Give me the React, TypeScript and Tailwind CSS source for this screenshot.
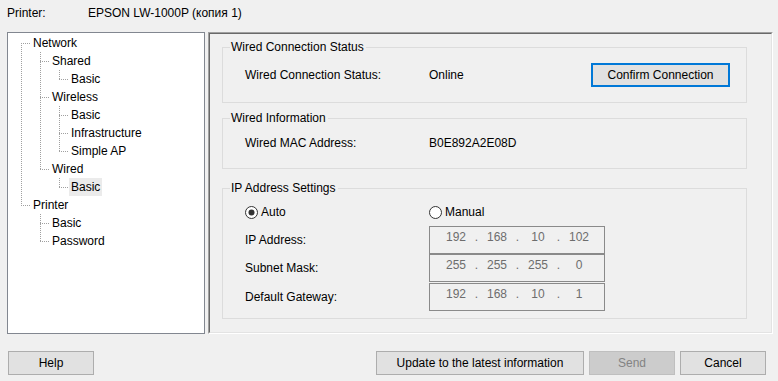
import React from "react";

type TreeItem = { label: string; level: number; selected?: boolean };

const tree: TreeItem[] = [
  { label: "Network", level: 0 },
  { label: "Shared", level: 1 },
  { label: "Basic", level: 2 },
  { label: "Wireless", level: 1 },
  { label: "Basic", level: 2 },
  { label: "Infrastructure", level: 2 },
  { label: "Simple AP", level: 2 },
  { label: "Wired", level: 1 },
  { label: "Basic", level: 2, selected: true },
  { label: "Printer", level: 0 },
  { label: "Basic", level: 1 },
  { label: "Password", level: 1 },
];

const padFor = ["pl-[25px]", "pl-[44px]", "pl-[63px]"];

function TreeLines() {
  const v = (x: number, y1: number, y2: number) => (
    <line key={`v${x}-${y1}`} x1={x + 0.5} y1={y1} x2={x + 0.5} y2={y2 + 1} />
  );
  const h = (x: number, y: number) => (
    <line key={`h${x}-${y}`} x1={x} y1={y + 0.5} x2={x + 10} y2={y + 0.5} />
  );
  return (
    <svg
      className="absolute left-0 top-0 pointer-events-none"
      width="196"
      height="300"
      stroke="#a0a0a0"
      strokeWidth="1"
      strokeDasharray="1 1"
      shapeRendering="crispEdges"
    >
      {v(13, 10, 172)}
      {h(13, 10)}
      {h(13, 172)}
      {v(32, 19, 136)}
      {h(32, 28)}
      {h(32, 64)}
      {h(32, 136)}
      {v(51, 37, 46)}
      {h(51, 46)}
      {v(51, 73, 118)}
      {h(51, 82)}
      {h(51, 100)}
      {h(51, 118)}
      {v(51, 145, 154)}
      {h(51, 154)}
      {v(32, 181, 208)}
      {h(32, 190)}
      {h(32, 208)}
    </svg>
  );
}

function Group({
  title,
  bodyClass,
  children,
}: {
  title: string;
  bodyClass: string;
  children: React.ReactNode;
}) {
  return (
    <div className="flex flex-col w-[525px]">
      <div className="flex h-[14px] items-center">
        <div className="w-[8px] h-[7px] self-end border-l border-t border-[#dcdcdc]" />
        <span className="pl-[1px] pr-[2px] whitespace-nowrap">{title}</span>
        <div className="flex-1 h-[7px] self-end border-t border-r border-[#dcdcdc]" />
      </div>
      <div className={`border-l border-r border-b border-[#dcdcdc] ${bodyClass}`}>{children}</div>
    </div>
  );
}

function Radio({ checked, label }: { checked: boolean; label: string }) {
  return (
    <div className="flex items-center gap-[3px]">
      <svg width="13" height="13" viewBox="0 0 13 13">
        <circle cx="6.5" cy="6.5" r="6" fill="#ffffff" stroke="#333333" strokeWidth="1" />
        {checked && <circle cx="6.5" cy="6.5" r="3" fill="#333333" />}
      </svg>
      <span>{label}</span>
    </div>
  );
}

function IpBox({ parts }: { parts: string[] }) {
  return (
    <div className="w-[176px] h-[28px] border border-[#8a8a8a] flex items-start pt-[3px] pl-[11px] text-[#6d6d6d]">
      <span className="w-[30px] text-center">{parts[0]}</span>
      <span className="w-[11px] text-center">.</span>
      <span className="w-[30px] text-center">{parts[1]}</span>
      <span className="w-[11px] text-center">.</span>
      <span className="w-[30px] text-center">{parts[2]}</span>
      <span className="w-[11px] text-center">.</span>
      <span className="w-[30px] text-center">{parts[3]}</span>
    </div>
  );
}

function IpRow({ label, parts, extra }: { label: string; parts: string[]; extra: string }) {
  return (
    <div className={`flex items-center pl-[22px] ${extra}`}>
      <span className="w-[184px]">{label}</span>
      <IpBox parts={parts} />
    </div>
  );
}

export default function App() {
  return (
    <div className="w-[778px] h-[381px] bg-[#f0f0f0] text-black text-[12px] leading-[14px] font-['Liberation_Sans',Arial,sans-serif] overflow-hidden">
      {/* header */}
      <div className="h-[25px] flex items-center pl-[7px]">
        <span className="w-[81px]">Printer:</span>
        <span>EPSON LW-1000P (копия 1)</span>
      </div>

      {/* main */}
      <div className="mt-[7px] flex pl-[7px]">
        <div className="relative w-[198px] h-[302px] border border-[#828790] bg-white">
          <TreeLines />
          <div className="pt-[1px]">
            {tree.map((t, i) => (
              <div key={i} className={`h-[18px] flex items-center ${padFor[t.level]}`}>
                {t.selected ? (
                  <span className="h-[18px] flex items-center px-[2px] -ml-[2px] bg-[#ebebeb]">
                    {t.label}
                  </span>
                ) : (
                  <span>{t.label}</span>
                )}
              </div>
            ))}
          </div>
        </div>

        <div className="ml-[3px] w-[565px] h-[302px] border border-t-[#a0a0a0] border-l-[#a0a0a0] border-r-white border-b-white">
          <div className="w-full h-full border border-t-[#696969] border-l-[#696969] border-r-[#e3e3e3] border-b-[#e3e3e3] pl-[12px] pt-[6px] flex flex-col">
            <Group title="Wired Connection Status" bodyClass="h-[49px]">
              <div className="flex items-center pl-[22px] pt-[9px]">
                <span className="w-[184px]">Wired Connection Status:</span>
                <span className="w-[162px]">Online</span>
                <button className="w-[139px] h-[24px] border-2 border-[#0078d7] bg-[#e1e1e1] flex items-center justify-center">
                  Confirm Connection
                </button>
              </div>
            </Group>

            <div className="mt-[8px]">
              <Group title="Wired Information" bodyClass="h-[44px]">
                <div className="flex items-center pl-[22px] pt-[11px]">
                  <span className="w-[184px]">Wired MAC Address:</span>
                  <span>B0E892A2E08D</span>
                </div>
              </Group>
            </div>

            <div className="mt-[12px]">
              <Group title="IP Address Settings" bodyClass="h-[124px]">
                <div className="flex items-center pl-[22px] pt-[10px]">
                  <div className="w-[184px]">
                    <Radio checked label="Auto" />
                  </div>
                  <Radio checked={false} label="Manual" />
                </div>
                <IpRow label="IP Address:" parts={["192", "168", "10", "102"]} extra="mt-[7px]" />
                <IpRow label="Subnet Mask:" parts={["255", "255", "255", "0"]} extra="" />
                <IpRow label="Default Gateway:" parts={["192", "168", "10", "1"]} extra="mt-[1px]" />
              </Group>
            </div>
          </div>
        </div>
      </div>

      {/* bottom buttons */}
      <div className="mt-[17px] flex items-center pl-[8px] pr-[12px]">
        <button className="w-[86px] h-[24px] border border-[#adadad] bg-[#e1e1e1]">Help</button>
        <div className="flex-1" />
        <button className="w-[208px] h-[24px] border border-[#adadad] bg-[#e1e1e1]">
          Update to the latest information
        </button>
        <button className="ml-[5px] w-[86px] h-[24px] border border-[#bfbfbf] bg-[#cccccc] text-[#838383]">
          Send
        </button>
        <button className="ml-[5px] w-[86px] h-[24px] border border-[#adadad] bg-[#e1e1e1]">
          Cancel
        </button>
      </div>
    </div>
  );
}
